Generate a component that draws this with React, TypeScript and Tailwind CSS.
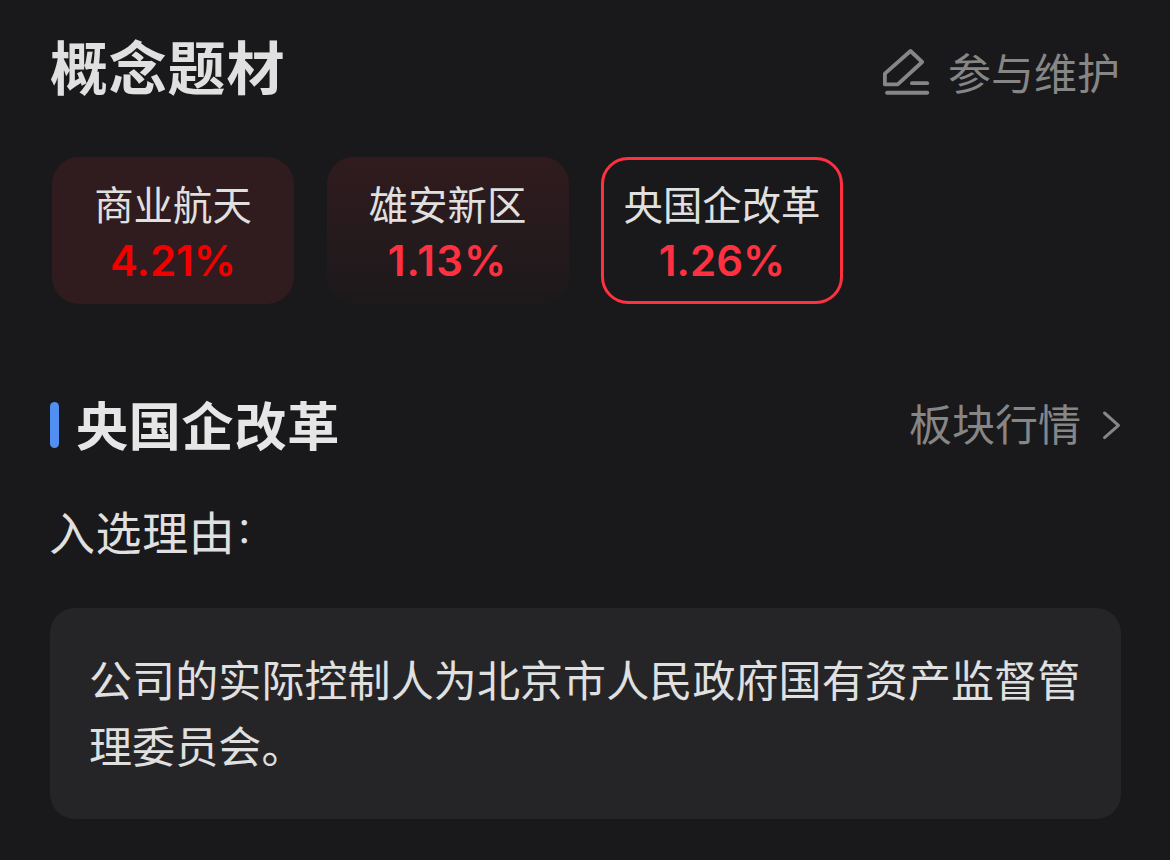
import { clsx } from 'clsx';

const concepts = [
  { name: '商业航天', change: '4.21%', card: 'bg-[#301b1e]', value: 'text-[#f20000]' },
  { name: '雄安新区', change: '1.13%', card: 'bg-linear-to-b from-[#301b1e] to-[#1c191b]', value: 'text-[#ff3140] tracking-[1.1px]' },
  { name: '央国企改革', change: '1.26%', card: 'border-3 border-[#ff3140]', value: 'text-[#ff3140]' },
];

function EditIcon() {
  return (
    <svg width="48" height="48" viewBox="0 0 48 48" fill="none" stroke="#868687" strokeLinejoin="round" strokeLinecap="round">
      <path d="M28.5 4 L40.2 15 L15.7 37.4 H2.9 V26.6 Z" strokeWidth="3.8" />
      <path d="M29.9 36.2 H45.2" strokeWidth="3.8" />
      <path d="M5.1 45.8 H45.2" strokeWidth="4" />
    </svg>
  );
}

export default function App() {
  return (
    <div className="h-[860px] w-[1170px] overflow-hidden bg-[#19191b] pl-[50px] pr-[49px] pt-[30px] font-['Noto_Sans_CJK_SC',sans-serif] text-[#e0e0e0]">
      {/* Title */}
      <header className="flex h-[72px] items-start justify-between">
        <h1 className="text-[58px] font-bold leading-[71px] tracking-[0.8px]">概念题材</h1>
        <div className="mr-[1px] flex pt-[17px] text-[#868687]">
          <EditIcon />
          <span className="-mt-[2px] ml-[18px] text-[43px] leading-[52px]">参与维护</span>
        </div>
      </header>

      {/* Concept cards */}
      <div className="ml-[2px] mt-[55px] flex gap-[32.5px]">
        {concepts.map((c) => (
          <div key={c.name} className={clsx('flex h-[147px] w-[242px] flex-col items-center rounded-[27px]', c.card)}>
            <div className={clsx('whitespace-nowrap text-[39.4px] leading-[50px]', c.card.includes('border') ? 'mt-[18px]' : 'mt-[21px]')}>
              {c.name}
            </div>
            <div className={clsx("mt-[8px] font-['Inter',sans-serif] text-[42px] font-semibold leading-[50px]", c.value)}>{c.change}</div>
          </div>
        ))}
      </div>

      {/* Selected concept */}
      <div className="mt-[86px] flex h-[70px] items-center justify-between">
        <div className="flex items-center">
          <span className="h-[46px] w-[9px] rounded-full bg-[#528ff2]" />
          <h2 className="-mt-[3px] ml-[17px] text-[52px] font-bold leading-[64px] tracking-[0.8px] text-[#e6e6e6]">央国企改革</h2>
        </div>
        <div className="flex items-center text-[#868687]">
          <span className="-mt-[6px] text-[43px] leading-[60px]">板块行情</span>
          <svg className="ml-[20px]" width="20" height="30" viewBox="0 0 20 30" fill="none" stroke="currentColor" strokeWidth="3" strokeLinecap="round" strokeLinejoin="round">
            <path d="M3.5 3 L17.5 15.3 L3.5 27.6" />
          </svg>
        </div>
      </div>

      <p className="-ml-[1px] mt-[40px] h-[61px] text-[46px] leading-[60px] tracking-[0.6px]">
        入选理由<span className="relative -top-[7px] text-[35px]">：</span>
      </p>

      <div className="mt-[47px] h-[211px] rounded-[25px] bg-[#252527] px-[39px] pt-[37px]">
        <p className="whitespace-nowrap text-[43px] leading-[66px] tracking-[0.1px]">
          公司的实际控制人为北京市人民政府国有资产监督管
          <br />
          理委员会。
        </p>
      </div>
    </div>
  );
}
